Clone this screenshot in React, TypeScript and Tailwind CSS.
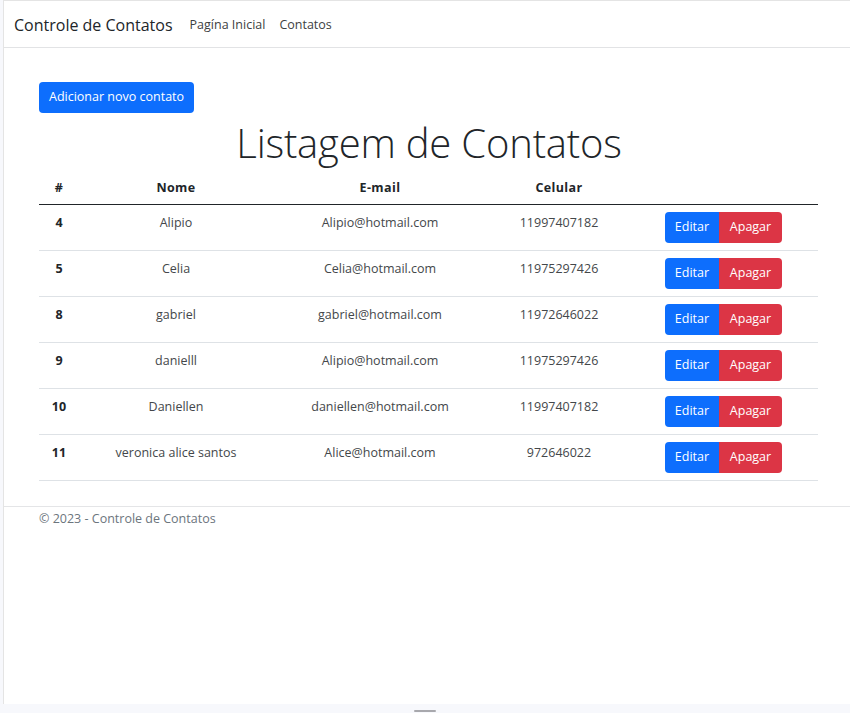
import React from "react";

const rows = [
  { id: "4", nome: "Alipio", email: "Alipio@hotmail.com", cel: "11997407182" },
  { id: "5", nome: "Celia", email: "Celia@hotmail.com", cel: "11975297426" },
  { id: "8", nome: "gabriel", email: "gabriel@hotmail.com", cel: "11972646022" },
  { id: "9", nome: "danielll", email: "Alipio@hotmail.com", cel: "11975297426" },
  { id: "10", nome: "Daniellen", email: "daniellen@hotmail.com", cel: "11997407182" },
  { id: "11", nome: "veronica alice santos", email: "Alice@hotmail.com", cel: "972646022" },
];

export default function App() {
  return (
    <div className="w-[850px] h-[713px] bg-[#f7f8fc] flex flex-col overflow-hidden text-[#212529]" style={{ fontFamily: '"Open Sans", "Noto Sans", sans-serif' }}>
      <div className="ml-[3px] h-[704px] bg-white border-l border-t border-[#e4e4e4] flex flex-col">
        <nav className="h-[47px] border-b border-[#e2e3e5] flex items-center pl-[10px] pt-[3px] shrink-0">
          <span className="text-[16px] text-[#212529] mr-[17px] leading-none pb-[1px]">Controle de Contatos</span>
          <span className="text-[12.5px] text-[#3d3f42] mr-[14px] leading-none">Pagína Inicial</span>
          <span className="text-[12.5px] text-[#3d3f42] leading-none">Contatos</span>
        </nav>
        <main className="pl-[35px] pr-[31px] pt-[34px] shrink-0">
          <button className="h-[31px] px-[10px] bg-[#0d6efd] text-white text-[12.5px] rounded-[4px] leading-none">
            Adicionar novo contato
          </button>
          <h1 className="text-center text-[40px] font-light leading-none h-[57px] pt-[10px] tracking-[-0.2px]">Listagem de Contatos</h1>
          <table className="table-fixed border-collapse w-[779px] text-[12.5px]">
            <colgroup>
              <col className="w-[40px]" />
              <col className="w-[194px]" />
              <col className="w-[214px]" />
              <col className="w-[144px]" />
              <col className="w-[187px]" />
            </colgroup>
            <thead>
              <tr className="h-[34px] border-b border-[#212529]">
                <th className="font-bold tracking-[0.4px] align-middle pt-[3px]">#</th>
                <th className="font-bold tracking-[0.4px] align-middle pt-[3px]">Nome</th>
                <th className="font-bold tracking-[0.4px] align-middle pt-[3px]">E-mail</th>
                <th className="font-bold tracking-[0.4px] align-middle pt-[3px]">Celular</th>
                <th></th>
              </tr>
            </thead>
            <tbody>
              {rows.map((r) => (
                <tr key={r.id} className="h-[46px] border-b border-[#dee2e6]">
                  <td className="text-center align-top pt-[9px] font-bold">{r.id}</td>
                  <td className="text-center align-top pt-[9px] text-[#44474a]">{r.nome}</td>
                  <td className="text-center align-top pt-[9px] text-[#44474a]">{r.email}</td>
                  <td className="text-center align-top pt-[9px] text-[#44474a]">{r.cel}</td>
                  <td className="align-top pt-[7px]">
                    <div className="flex justify-center pr-[2px]">
                      <span className="h-[31px] w-[54px] flex items-center justify-center bg-[#0d6efd] text-white rounded-l-[4px]">Editar</span>
                      <span className="h-[31px] w-[63px] flex items-center justify-center bg-[#dc3545] text-white rounded-r-[4px]">Apagar</span>
                    </div>
                  </td>
                </tr>
              ))}
            </tbody>
          </table>
        </main>
        <footer className="mt-[25px] border-t border-[#e4e5e7] pl-[35px] pt-[3px] text-[12.5px] text-[#6c757d]">
          © 2023 - Controle de Contatos
        </footer>
      </div>
      <div className="flex-1 flex justify-center items-end pb-[1px]">
        <div className="w-[22px] h-[2px] bg-[#a8a8ad] rounded-full"></div>
      </div>
    </div>
  );
}
